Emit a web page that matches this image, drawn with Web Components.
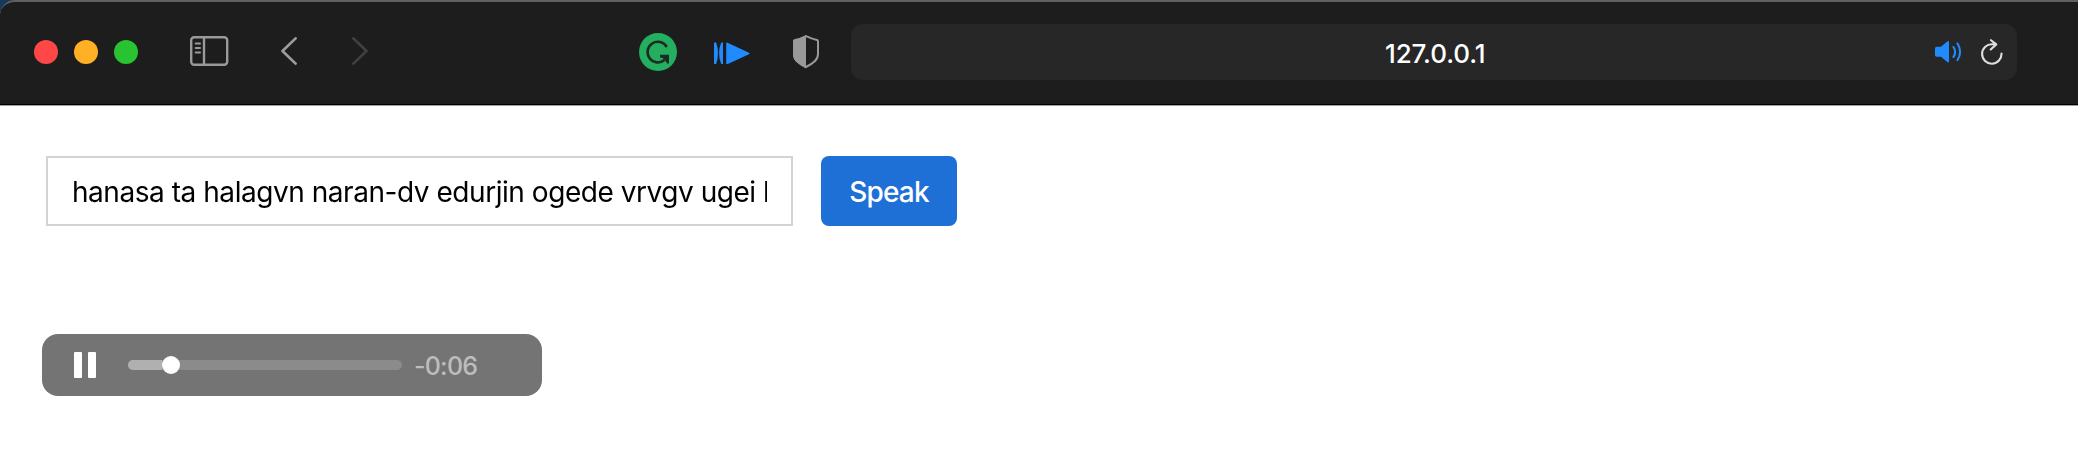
<!DOCTYPE html>
<html lang="en"><head><meta charset="utf-8"><title>127.0.0.1</title>
<style>html,body{margin:0;background:#fff;font-family:Inter,"Liberation Sans",sans-serif}body{height:472px;overflow:hidden}</style></head>
<body>
<browser-bar><address-field>127.0.0.1</address-field></browser-bar>
<speak-form value="hanasa ta halagvn naran-dv edurjin ogede vrvgv ugei l">Speak</speak-form>
<audio-player>-0:06</audio-player>
<script>
const define=(name,html)=>customElements.define(name,class extends HTMLElement{
  connectedCallback(){
    if(this.shadowRoot)return;
    const t=document.createElement('template');t.innerHTML=html;
    this.attachShadow({mode:'open'}).append(t.content.cloneNode(true));
    const f=this.shadowRoot.querySelector('[data-value]');
    if(f)f.textContent=this.getAttribute('value');
  }
});
define('browser-bar',`<style>
:host{display:block;height:106px;background:#17395a}
.bar{box-sizing:border-box;height:106px;display:flex;align-items:flex-start;background:#1d1d1d;border-top:2px solid #606060;border-radius:15px 0 0 0;box-shadow:inset 0 -1px #a0a0a0,inset 0 -2px #000}
svg{display:block;flex:none}
.lights{display:flex;gap:16px;margin:38px 52px 0 34px}
.lights i{width:24px;height:24px;border-radius:50%;background:#ff4748}
.lights i:nth-child(2){background:#ffb024}.lights i:nth-child(3){background:#29c231}
</style>
<div class="bar">
<div class="lights"><i></i><i></i><i></i></div>
<svg style="margin-top:34px;overflow:visible" width="38" height="30" viewBox="0 0 38 30" fill="none" stroke="#9a9a9a" stroke-width="2.400"><rect x="1.200" y="1.200" width="36" height="27.600" rx="3"/><path d="M14 1v28"/><path d="M5.600 7.500h4.500M5.600 12h4.500M5.600 16.500h4.500" stroke-width="1.800" stroke-linecap="round"/></svg>
<svg style="margin:35px 0 0 53px" width="16" height="28" viewBox="0 0 16 28" fill="none" stroke="#9c9c9c" stroke-width="2.700" stroke-linecap="round" stroke-linejoin="round"><path d="M14.600 1.400 1.500 14l13.100 12.600"/></svg>
<svg style="margin:35px 0 0 55px" width="16" height="28" viewBox="0 0 16 28" fill="none" stroke="#404040" stroke-width="2.700" stroke-linecap="round" stroke-linejoin="round"><path d="M1.400 1.400 14.500 14 1.400 26.600"/></svg>
<svg style="margin:31px 0 0 271px" width="38" height="38" viewBox="0 0 38 38"><circle cx="19" cy="19" r="19" fill="#23ae60"/><path d="M27.800 14A10.300 10.300 0 1 0 25.500 27" fill="none" stroke="#1d2b22" stroke-width="2.600"/><path d="M21 21.800H30V30.500H28L26.200 27.500 23.600 25 21 24.400z" fill="#1d2b22"/></svg>
<svg style="margin:40px 0 0 37px" width="37" height="24" viewBox="0 0 37 24" fill="#208bff"><path d="M0 .5h2.200Q5.800 11 2.200 22H0zM9 .5H7.200Q2.900 11 7.200 22H9zM13.500.7q-1.300-.7-1.300 1v19.200q0 1.700 1.600 1L35 12.300q1.500-.8 0-1.600z"/></svg>
<svg style="margin:33px 0 0 41px" width="28" height="34" viewBox="0 0 28 34"><path d="M14 1.200Q20 4 25 5q1 .2 1 1.500V19q0 4-3 7-3 3-9 6-6-3-9-6-3-3-3-7V6.500Q2 5.200 3 5 9 4 14 1.200z" fill="none" stroke="#999" stroke-width="2"/><path d="M14 .5v33Q8 30.500 4.500 27 1 24 1 19V6.300Q1 5 2.500 4.700 9 3 14 .5z" fill="#999"/></svg>
<slot></slot></div>`);
define('address-field',`<style>
:host{box-sizing:border-box;display:flex;align-items:center;width:1166px;height:56px;margin:22px 0 0 31px;padding:0 14px 0 534px;border-radius:12px;background:#272727;color:#fff;font:500 26px/56px Inter,sans-serif}
.t{width:550px;flex:none;white-space:nowrap;padding-top:3px;letter-spacing:-.1px}svg{display:block;flex:none}
</style><span class="t"><slot></slot></span>
<svg width="27" height="22" viewBox="0 0 27 22"><path d="M0 7.500Q0 5.800 1.700 5.800H6L12.200.5Q14 -.6 14 1V20.500Q14 22 12.300 21L6 15.800H1.700Q0 15.800 0 14z" fill="#208bff"/><path d="M18.500 6q3.200 5 0 10M22.500 2.500q5.200 8.300 0 16.500" fill="none" stroke="#208bff" stroke-width="2.100" stroke-linecap="round"/></svg>
<svg style="margin-left:19px" width="22" height="26" viewBox="0 0 22 26" fill="none" stroke="#dedede" stroke-width="2.100" stroke-linecap="round"><path d="M14.500 5.300H11A9.700 9.700 0 1 0 20.500 14.500M10 1.200l5.300 4.200L9.700 10.500" stroke-linejoin="round"/></svg>`);
define('speak-form',`<style>
:host{display:flex;gap:28px;padding:50px 0 0 46px;height:70px;font-size:28px}
.field{box-sizing:border-box;width:747px;height:70px;border:2px solid #d3d3d3;padding:0 24px}
.v{display:block;overflow:hidden;white-space:pre;line-height:68px;height:66px;color:#000;letter-spacing:-.455px;will-change:transform}
button{box-sizing:border-box;width:136px;height:70px;border:0;border-radius:8px;background:#1f70d6;color:#fff;padding:2px 0 0;font:500 28px Inter,sans-serif;letter-spacing:-.8px}
</style><div class="field"><span class="v" data-value></span></div><button><slot></slot></button>`);
define('audio-player',`<style>
:host{box-sizing:border-box;display:flex;align-items:center;width:500px;height:62px;margin:108px 0 0 42px;padding-left:32px;border-radius:16px;background:#747474;color:#bdbdbd;font-size:25px}
.pause{display:flex;gap:6px;margin-right:32px}.pause i{width:8px;height:26px;border-radius:1px;background:#fff}
.track{display:flex;align-items:center;width:274px;height:10px;border-radius:5px;background:#8b8b8b}
.done{width:34px;height:10px;border-radius:5px 0 0 5px;background:#b0b0b0}
.thumb{width:18px;height:18px;border-radius:50%;background:#fff;flex:none}
.time{margin-left:12px;letter-spacing:-.8px;padding-top:1px;font-weight:500}
</style><div class="pause"><i></i><i></i></div><div class="track"><div class="done"></div><div class="thumb"></div></div><span class="time"><slot></slot></span>`);
</script></body></html>
